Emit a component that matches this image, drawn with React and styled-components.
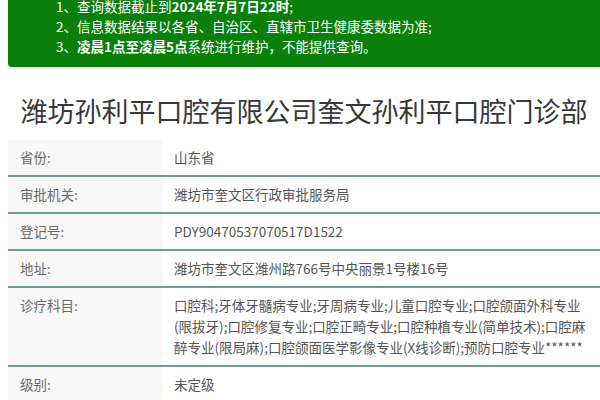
import React from 'react';
import styled, { createGlobalStyle } from 'styled-components';

const GlobalStyle = createGlobalStyle`
  html, body {
    margin: 0;
    padding: 0;
    overflow: hidden;
    background: #fff;
  }

  body {
    font-family: "Microsoft YaHei", "Noto Sans CJK SC", "Noto Sans", sans-serif;
  }
`;

const Page = styled.div`
  width: 592px;
  margin-left: 8px;
`;

const Notice = styled.div`
  margin: -14px -12px 0 0;
  padding: 10px 0 11px 48px;
  background: #0a800a;
  border-radius: 4px;
  box-shadow: 0 1px 2px rgba(0, 0, 0, 0.18);
  color: #fff;
  font-size: 13.5px;
  line-height: 20px;
`;

const NoticeLine = styled.div`
  white-space: nowrap;

  b {
    font-weight: 700;
  }
`;

const Title = styled.h1`
  margin: 24px 0 9px;
  text-align: center;
  font-size: 27px;
  line-height: 40px;
  font-weight: 400;
  color: #383838;
  white-space: nowrap;
`;

const Table = styled.div`
  display: flex;
  flex-direction: column;
`;

const Row = styled.div`
  display: grid;
  grid-template-columns: 155px 1fr;
  border-bottom: 2px solid #6e9e91;
  border-bottom-color: ${({ last }) => (last ? 'transparent' : '#6e9e91')};
`;

const Label = styled.div`
  padding: 7px 0 7px 12px;
  background: #f8f8f8;
  color: #6a6a6a;
  font-size: 13.5px;
  line-height: 21px;
`;

const Value = styled.div`
  padding: 7px 10px 7px 11px;
  color: #565656;
  font-size: 13.5px;
  line-height: 21px;
  word-break: break-all;
`;

const rows = [
  ['省份:', '山东省'],
  ['审批机关:', '潍坊市奎文区行政审批服务局'],
  ['登记号:', 'PDY90470537070517D1522'],
  ['地址:', '潍坊市奎文区潍州路766号中央丽景1号楼16号'],
  [
    '诊疗科目:',
    '口腔科;牙体牙髓病专业;牙周病专业;儿童口腔专业;口腔颌面外科专业(限拔牙);口腔修复专业;口腔正畸专业;口腔种植专业(简单技术);口腔麻醉专业(限局麻);口腔颌面医学影像专业(X线诊断);预防口腔专业******'
  ],
  ['级别:', '未定级']
];

const App = () => (
  <Page>
    <GlobalStyle />
    <Notice>
      <NoticeLine>
        1、查询数据截止到<b>2024年7月7日22时</b>;
      </NoticeLine>
      <NoticeLine>2、信息数据结果以各省、自治区、直辖市卫生健康委数据为准;</NoticeLine>
      <NoticeLine>
        3、<b>凌晨1点至凌晨5点</b>系统进行维护，不能提供查询。
      </NoticeLine>
    </Notice>
    <Title>潍坊孙利平口腔有限公司奎文孙利平口腔门诊部</Title>
    <Table>
      {rows.map(([label, value], i) => (
        <Row key={label} last={i === rows.length - 1}>
          <Label>{label}</Label>
          <Value>{value}</Value>
        </Row>
      ))}
    </Table>
  </Page>
);

export default App;
